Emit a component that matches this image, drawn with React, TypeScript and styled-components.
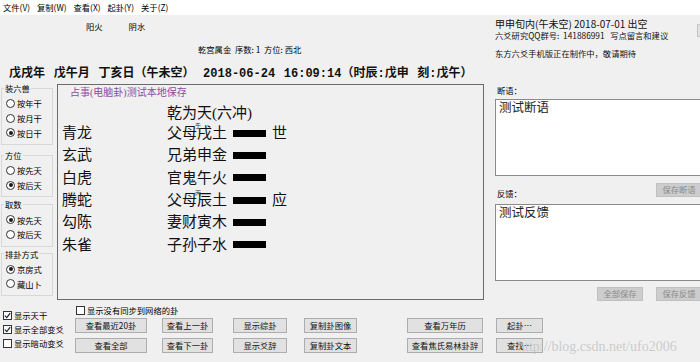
import React from "react";
import styled, { createGlobalStyle } from "styled-components";

const UI = `"Noto Sans CJK SC", "Liberation Sans", sans-serif`;
const SERIF = `"Liberation Serif", "Noto Sans CJK SC", serif`;
const MONO = `"Liberation Mono", "Noto Sans CJK SC", monospace`;

const Global = createGlobalStyle`
  html, body { margin: 0; padding: 0; background: #f0f0f0; overflow: hidden; }
  * { box-sizing: border-box; }
`;

const Window = styled.div`
  position: relative;
  width: 700px;
  height: 362px;
  overflow: hidden;
  background: #f0f0f0;
  color: #000;
  font-family: ${UI};
  font-size: 8.3px;
  line-height: 1;
  display: flex;
  flex-direction: column;
`;

const MenuBar = styled.div`
  height: 15px;
  flex: none;
  background: #fff;
  display: flex;
  align-items: center;
  gap: 7px;
  padding-left: 3px;
`;

const MenuItem = styled.span`
  white-space: nowrap;
`;

const TopArea = styled.div`
  height: 49px;
  flex: none;
  display: grid;
  grid-template-columns: 495px 1fr;
`;

const TopLeft = styled.div`
  display: flex;
  flex-direction: column;
  padding-top: 6px;
`;

const ElementRow = styled.div`
  display: flex;
  gap: 26px;
  padding-left: 86px;
  line-height: 10px;
`;

const PalaceInfo = styled.div`
  margin-top: 13px;
  padding-left: 198px;
  line-height: 10px;
  white-space: pre;
`;

const TopRight = styled.div`
  display: flex;
`;

const InfoColumn = styled.div`
  flex: 1;
  display: flex;
  flex-direction: column;
  padding-top: 3px;
`;

const InfoHead = styled.div`
  font-size: 10px;
  line-height: 12px;
  white-space: pre;
  color: #111;
`;

const InfoLine = styled.div<{ $mt?: number }>`
  margin-top: ${(p) => p.$mt ?? 0}px;
  line-height: 10px;
  white-space: pre;
  color: #111;
`;

const EdgeMark = styled.div`
  width: 3px;
  height: 13px;
  margin-top: 9px;
  background: #e2e2e2;
  border: 1px solid #c4c4c4;
  border-right: none;
`;

const DateLine = styled.div`
  height: 20px;
  flex: none;
  padding: 1px 0 0 9px;
  font-family: ${MONO};
  font-size: 12px;
  font-weight: bold;
  line-height: 18px;
  white-space: pre;
  word-spacing: 1.5px;
  color: #111;
`;

const Main = styled.div`
  display: grid;
  grid-template-columns: 57px 427px 226px;
  height: 217px;
  flex: none;
`;

const LeftPanel = styled.div`
  display: flex;
  flex-direction: column;
`;

const Group = styled.fieldset<{ $mt: number }>`
  margin: ${(p) => p.$mt}px 0 0 1px;
  padding: 4px 0 4px 4px;
  border: 1px solid #d8d8d8;
  width: 52px;
  min-width: 0;
`;

const GroupLabel = styled.legend`
  padding: 0 1px;
  margin-left: -2px;
  font-size: 8.3px;
  line-height: 8px;
`;

const RadioRow = styled.div`
  display: flex;
  align-items: center;
  gap: 2px;
  height: 14.7px;
  white-space: nowrap;
`;

const RadioDot = styled.span<{ $checked?: boolean }>`
  position: relative;
  flex: none;
  width: 9px;
  height: 9px;
  border-radius: 50%;
  border: 1px solid #333;
  background: #fff;
  &::after {
    content: "";
    display: ${(p) => (p.$checked ? "block" : "none")};
    position: absolute;
    left: 1.5px;
    top: 1.5px;
    width: 4px;
    height: 4px;
    border-radius: 50%;
    background: #1a1a1a;
  }
`;

const ChartBox = styled.div`
  height: 216px;
  border: 1px solid #6b6b6b;
  padding: 2px 0 0 4px;
  font-family: ${SERIF};
  color: #111;
`;

const ChartTitle = styled.div`
  padding-left: 8px;
  font-size: 10px;
  line-height: 12px;
  color: #8e4b9e;
`;

const HexName = styled.div`
  margin-top: 5px;
  padding-left: 105px;
  font-size: 15px;
  line-height: 18px;
`;

const LineGrid = styled.div`
  display: grid;
  grid-template-columns: 105px auto;
  grid-auto-rows: 22.3px;
  align-items: center;
  font-size: 15px;
  line-height: 18px;
`;

const SixGod = styled.div``;

const LineCell = styled.div`
  display: flex;
  align-items: center;
`;

const LineName = styled.span`
  position: relative;
  width: 61px;
  white-space: nowrap;
`;

const HiddenStem = styled.span`
  position: absolute;
  left: 28px;
  top: -1px;
  font-size: 6px;
  line-height: 6px;
  color: #333;
`;

const YaoBar = styled.span`
  width: 33px;
  height: 7px;
  margin-left: 5px;
  background: #000;
`;

const YaoMark = styled.span`
  margin-left: 6px;
`;

const SidePanel = styled.div`
  display: flex;
  flex-direction: column;
  padding-left: 11px;
`;

const FieldLabel = styled.div<{ $mt?: number }>`
  margin-top: ${(p) => p.$mt ?? 0}px;
  margin-left: 2px;
  line-height: 9px;
`;

const NoteArea = styled.div<{ $mt: number }>`
  margin-top: ${(p) => p.$mt}px;
  height: 77px;
  background: #fff;
  border: 1px solid #8a8a8a;
  padding: 1px 3px;
  font-family: ${SERIF};
  font-size: 12.5px;
  line-height: 15px;
  color: #222;
`;

const SectionRow = styled.div`
  height: 23px;
  display: flex;
  justify-content: space-between;
  align-items: flex-end;
  padding-right: 8px;
`;

const ActionRow = styled.div`
  display: flex;
  justify-content: flex-end;
  gap: 13px;
  margin-top: 6px;
  padding-right: 8px;
`;

const DisabledButton = styled.div<{ $top?: boolean }>`
  align-self: ${(p) => (p.$top ? "flex-start" : "auto")};
  margin-top: ${(p) => (p.$top ? 7 : 0)}px;
  width: 46px;
  height: 14px;
  display: flex;
  align-items: center;
  justify-content: center;
  background: #cdcdcd;
  border: 1px solid #c0c0c0;
  color: #8a8a8a;
`;

const SideLabel = styled(FieldLabel)`
  margin-bottom: 1px;
`;

const Bottom = styled.div`
  flex: 1;
  display: flex;
`;

const LeftChecks = styled.div`
  width: 75px;
  flex: none;
  display: flex;
  flex-direction: column;
  gap: 1px;
  padding: 8px 0 0 3px;
`;

const CheckRow = styled.div<{ $h?: number }>`
  display: flex;
  align-items: center;
  gap: 2px;
  height: ${(p) => p.$h ?? 13}px;
  white-space: nowrap;
`;

const CheckBoxBox = styled.span`
  flex: none;
  width: 9px;
  height: 9px;
  border: 1px solid #333;
  background: #fff;
  display: inline-flex;
  align-items: center;
  justify-content: center;
`;

const CommandArea = styled.div`
  display: flex;
  flex-direction: column;
  padding: 4px 0 0 1px;
`;

const ButtonColumns = styled.div`
  display: flex;
  margin-top: 3px;
  margin-left: -1px;
`;

const ButtonColumn = styled.div<{ $ml: number; $w: number }>`
  display: flex;
  flex-direction: column;
  gap: 5px;
  margin-left: ${(p) => p.$ml}px;
  width: ${(p) => p.$w}px;
`;

const CmdButton = styled.div`
  height: 15px;
  display: flex;
  align-items: center;
  justify-content: center;
  background: #e1e1e1;
  border: 1px solid #adadad;
  white-space: nowrap;
  color: #111;
`;

const Watermark = styled.div`
  position: absolute;
  left: 518px;
  top: 339px;
  font-family: ${SERIF};
  font-size: 14px;
  line-height: 16px;
  color: rgba(196, 196, 196, 0.85);
  white-space: nowrap;
  pointer-events: none;
`;

const Check = ({ checked }: { checked?: boolean }) => (
  <CheckBoxBox>
    {checked && (
      <svg width="7" height="7" viewBox="0 0 7 7">
        <path d="M0.8 3.6 L2.8 5.6 L6.2 1.2" stroke="#222" strokeWidth="1.2" fill="none" />
      </svg>
    )}
  </CheckBoxBox>
);

const groups = [
  { label: "装六兽", mt: 0, items: ["按年干", "按月干", "按日干"], checked: 2 },
  { label: "方位", mt: 6, items: ["按先天", "按后天"], checked: 1 },
  { label: "取数", mt: 3, items: ["按先天", "按后天"], checked: 0 },
  { label: "排卦方式", mt: 3, items: ["京房式", "藏山卜"], checked: 0 },
];

const lines = [
  { god: "青龙", name: "父母戌土", stem: "壬", mark: "世" },
  { god: "玄武", name: "兄弟申金" },
  { god: "白虎", name: "官鬼午火" },
  { god: "腾蛇", name: "父母辰土", stem: "丙", mark: "应" },
  { god: "勾陈", name: "妻财寅木" },
  { god: "朱雀", name: "子孙子水" },
];

const columns = [
  { ml: 0, w: 72, items: ["查看最近20卦", "查看全部"] },
  { ml: 15, w: 51, items: ["查看上一卦", "查看下一卦"] },
  { ml: 20, w: 54, items: ["显示综卦", "显示爻辞"] },
  { ml: 17, w: 53, items: ["复制卦图像", "复制卦文本"] },
  { ml: 50, w: 76, items: ["查看万年历", "查看焦氏易林卦辞"] },
  { ml: 13, w: 47, items: ["起卦…", "查找…"] },
];

export default function App() {
  return (
    <>
      <Global />
      <Window>
        <MenuBar>
          {["文件(V)", "复制(W)", "查看(X)", "起卦(Y)", "关于(Z)"].map((m) => (
            <MenuItem key={m}>{m}</MenuItem>
          ))}
        </MenuBar>
        <TopArea>
          <TopLeft>
            <ElementRow>
              <span>阳火</span>
              <span>阴水</span>
            </ElementRow>
            <PalaceInfo>乾宫属金  序数: 1  方位: 西北</PalaceInfo>
          </TopLeft>
          <TopRight>
            <InfoColumn>
              <InfoHead>甲申旬内(午未空) 2018-07-01 出空</InfoHead>
              <InfoLine>六爻研究QQ群号:  141886991   写点留言和建议</InfoLine>
              <InfoLine $mt={8}>东方六爻手机版正在制作中，敬请期待</InfoLine>
            </InfoColumn>
            <EdgeMark />
          </TopRight>
        </TopArea>
        <DateLine>戊戌年 戊午月 丁亥日（午未空） 2018-06-24 16:09:14（时辰:戊申 刻:戊午）</DateLine>
        <Main>
          <LeftPanel>
            {groups.map((g) => (
              <Group key={g.label} $mt={g.mt}>
                <GroupLabel>{g.label}</GroupLabel>
                {g.items.map((it, i) => (
                  <RadioRow key={it}>
                    <RadioDot $checked={i === g.checked} />
                    <span>{it}</span>
                  </RadioRow>
                ))}
              </Group>
            ))}
          </LeftPanel>
          <ChartBox>
            <ChartTitle>占事(电脑卦)测试本地保存</ChartTitle>
            <HexName>乾为天(六冲)</HexName>
            <LineGrid>
              {lines.map((l) => (
                <React.Fragment key={l.god}>
                  <SixGod>{l.god}</SixGod>
                  <LineCell>
                    <LineName>
                      {l.name}
                      {l.stem && <HiddenStem>{l.stem}</HiddenStem>}
                    </LineName>
                    <YaoBar />
                    {l.mark && <YaoMark>{l.mark}</YaoMark>}
                  </LineCell>
                </React.Fragment>
              ))}
            </LineGrid>
          </ChartBox>
          <SidePanel>
            <FieldLabel $mt={1.5}>断语：</FieldLabel>
            <NoteArea $mt={4}>测试断语</NoteArea>
            <SectionRow>
              <SideLabel>反馈：</SideLabel>
              <DisabledButton $top>保存断语</DisabledButton>
            </SectionRow>
            <NoteArea $mt={5}>测试反馈</NoteArea>
            <ActionRow>
              <DisabledButton>全部保存</DisabledButton>
              <DisabledButton>保存反馈</DisabledButton>
            </ActionRow>
          </SidePanel>
        </Main>
        <Bottom>
          <LeftChecks>
            <CheckRow>
              <Check checked />
              <span>显示天干</span>
            </CheckRow>
            <CheckRow>
              <Check checked />
              <span>显示全部变爻</span>
            </CheckRow>
            <CheckRow>
              <Check />
              <span>显示暗动变爻</span>
            </CheckRow>
          </LeftChecks>
          <CommandArea>
            <CheckRow $h={10}>
              <Check />
              <span>显示没有同步到网络的卦</span>
            </CheckRow>
            <ButtonColumns>
              {columns.map((c) => (
                <ButtonColumn key={c.items[0]} $ml={c.ml} $w={c.w}>
                  {c.items.map((b) => (
                    <CmdButton key={b}>{b}</CmdButton>
                  ))}
                </ButtonColumn>
              ))}
            </ButtonColumns>
          </CommandArea>
        </Bottom>
        <Watermark>http://blog.csdn.net/ufo2006</Watermark>
      </Window>
    </>
  );
}
